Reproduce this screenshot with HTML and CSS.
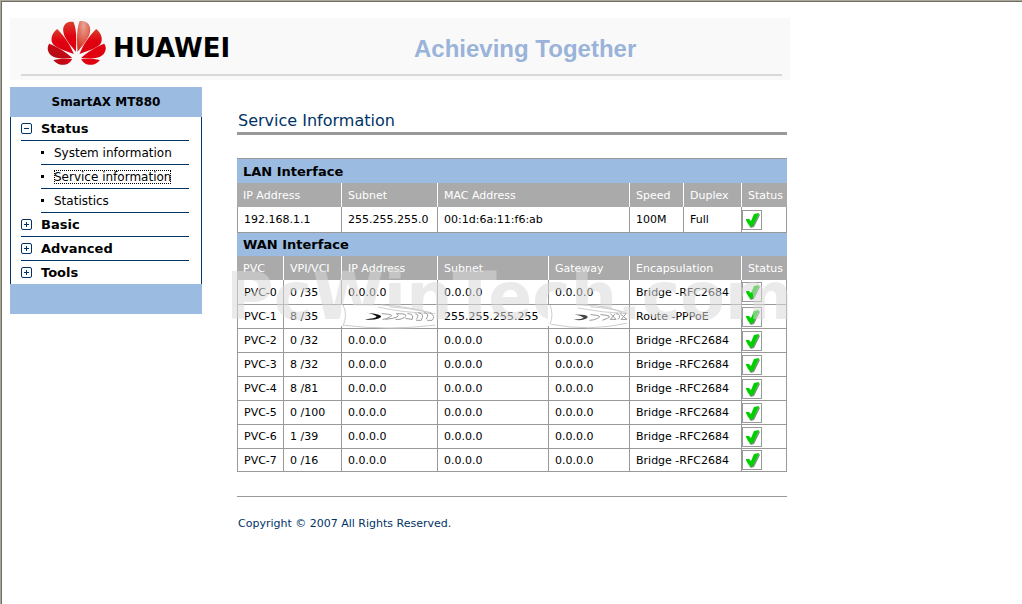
FILE: index.html
```
<!doctype html>
<html lang="en">

<head>
    <meta charset="utf-8">
    <meta name="viewport" content="width=device-width, initial-scale=1">
    <title>SmartAX MT880</title>
    <link rel="stylesheet" href="styles.css">
</head>

<body>
    <!-- shared icons -->
    <svg class="defs" width="0" height="0">
        <symbol id="minus" viewBox="0 0 11 11">
            <rect x="0.5" y="0.5" width="10" height="10" rx="1.5" fill="#fff" stroke="#003366" />
            <path d="M3 5.5h5" stroke="#003366" />
        </symbol>
        <symbol id="plus" viewBox="0 0 11 11">
            <rect x="0.5" y="0.5" width="10" height="10" rx="1.5" fill="#fff" stroke="#003366" />
            <path d="M3 5.5h5M5.5 3v5" stroke="#003366" />
        </symbol>
        <symbol id="tick" viewBox="0 0 18 18">
            <path d="M16 3l1 1-6 12-3 1-2-2 5-3z" fill="#888" />
            <path d="M3 8l3 0 2 2 3-7 5-1v1l-4 8-2 4-2 1-3-3-2-4z" fill="#00d000" />
        </symbol>
    </svg>

    <div class="page">
        <header class="banner">
            <div class="brand">
                <svg class="petals" viewBox="141 60 176 132">
                    <defs>
                        <linearGradient id="red" x1="0" y1="0" x2="0" y2="1">
                            <stop offset="0" stop-color="#d8402c" />
                            <stop offset=".5" stop-color="#e00010" />
                            <stop offset="1" stop-color="#dc0010" />
                        </linearGradient>
                        <radialGradient id="shine" cx=".5" cy=".15" r=".8">
                            <stop offset="0" stop-color="#e8a898" />
                            <stop offset="1" stop-color="#d83020" />
                        </radialGradient>
                        <linearGradient id="dark" x1="0" y1="1" x2="1" y2="0">
                            <stop offset="0" stop-color="#a81018" />
                            <stop offset="1" stop-color="#e00010" />
                        </linearGradient>
                    </defs>
                    <path fill="url(#red)" d="M227 152C200 121 188 104 189 84C190 66 207 59 220 63C230 84 229 120 227 152z" />
                    <path fill="url(#red)" d="M221 159C195 149 162 139 156 125C150 109 159 93 171 84C190 102 211 133 221 159z" />
                    <path fill="url(#dark)" d="M216 171C190 174 160 174 148 158C140 147 142 136 147 128C172 137 200 155 216 171z" />
                    <path fill="url(#dark)" d="M216 174C208 190 195 193 182 191C171 190 164 182 160 177C176 173 199 173 216 174z" />
                    <path fill="url(#shine)" d="M232 152C259 121 271 104 270 84C269 66 252 57 238 61C229 84 230 120 232 152z" />
                    <path fill="url(#red)" d="M238 159C264 149 297 139 303 125C309 109 300 93 288 84C269 102 248 133 238 159z" />
                    <path fill="#e00010" d="M243 171C269 174 299 174 311 158C319 147 318 136 312 128C287 137 259 155 243 171z" />
                    <path fill="#e00010" d="M243 174C251 190 264 193 277 191C288 190 295 182 299 177C283 173 260 173 243 174z" />
                </svg>
                <span class="brand-name">HUAWEI</span>
            </div>
            <span class="slogan">Achieving Together</span>
        </header>

        <div class="columns">
            <nav class="side">
                <div class="side-head">SmartAX MT880</div>
                <ul class="menu">
                    <li>
                        <a class="group" href="#status"><svg class="box"><use href="#minus" /></svg>Status</a>
                        <ul class="submenu">
                            <li><a href="#system">System information</a></li>
                            <li><a class="current" href="#service">Service information</a></li>
                            <li><a href="#statistics">Statistics</a></li>
                        </ul>
                    </li>
                    <li><a class="group" href="#basic"><svg class="box"><use href="#plus" /></svg>Basic</a></li>
                    <li><a class="group" href="#advanced"><svg class="box"><use href="#plus" /></svg>Advanced</a></li>
                    <li><a class="group" href="#tools"><svg class="box"><use href="#plus" /></svg>Tools</a></li>
                </ul>
                <div class="side-foot"></div>
            </nav>

            <main class="content">
                <h1>Service Information</h1>

                <div class="table-wrap">
                    <table>
                        <colgroup>
                            <col class="c-pvc"><col class="c-vpi"><col class="c-ip"><col class="c-subnet">
                            <col class="c-gateway"><col class="c-speed"><col class="c-duplex"><col class="c-status">
                        </colgroup>
                        <tbody class="lan">
                            <tr><th class="title" colspan="8">LAN Interface</th></tr>
                            <tr>
                                <th colspan="2">IP Address</th><th>Subnet</th><th colspan="2">MAC Address</th>
                                <th>Speed</th><th>Duplex</th><th>Status</th>
                            </tr>
                            <tr>
                                <td colspan="2">192.168.1.1</td><td>255.255.255.0</td><td colspan="2">00:1d:6a:11:f6:ab</td>
                                <td>100M</td><td>Full</td><td class="state"><svg class="tick"><use href="#tick" /></svg></td>
                            </tr>
                        </tbody>
                        <tbody class="wan">
                            <tr><th class="title" colspan="8">WAN Interface</th></tr>
                            <tr>
                                <th>PVC</th><th>VPI/VCI</th><th>IP Address</th><th>Subnet</th><th>Gateway</th>
                                <th colspan="2">Encapsulation</th><th>Status</th>
                            </tr>
                            <tr class="first">
                                <td>PVC-0</td><td>0 /35</td><td>0.0.0.0</td><td>0.0.0.0</td><td>0.0.0.0</td>
                                <td colspan="2">Bridge -RFC2684</td><td class="state"><svg class="tick"><use href="#tick" /></svg></td>
                            </tr>
                            <tr>
                                <td>PVC-1</td><td>8 /35</td>
                                <td class="smudge">
                                    <svg viewBox="0 0 96 24" preserveAspectRatio="none">
                                        <path class="patch" d="M-1 0L42 1Q68 2 95 9V23Q55 26 -1 22z" />
                                        <path class="edge" d="M1 0Q6 10 1 22M1 21Q46 27 94 21M40 0Q66 1 92 9M48 2Q68 3 90 8M36 2Q60 8 94 9" />
                                        <path d="M24 8Q46 10 37 14Q31 16 23 15Q34 14 35 12Q32 9 24 8z" fill="#111" />
                                        <path class="scrawl" d="M40 9Q54 10 49 12Q45 15 41 15M44 15Q62 13 55 9M55 9Q69 9 63 13Q59 16 54 15M66 9Q73 9 71 15L64 14M74 9Q79 10 75 15M77 8Q84 9 80 16H75M83 8Q89 9 85 15M89 8Q95 12 91 16H86" />
                                    </svg>
                                </td>
                                <td>255.255.255.255</td>
                                <td class="smudge">
                                    <svg viewBox="0 0 81 24" preserveAspectRatio="none">
                                        <path class="patch" d="M-1 0L42 1Q62 2 80 9V23Q45 26 -1 22z" />
                                        <path class="edge" d="M1 0Q5 10 1 20M2 20Q40 28 79 19M34 0Q59 0 76 9M29 3Q53 8 79 9M42 2Q63 3 78 8" />
                                        <path d="M26 10Q43 10 38 14Q32 17 25 15Q34 15 35 13Q32 11 26 10z" fill="#444" />
                                        <path class="scrawl" d="M42 10Q56 11 49 14Q45 16 41 16M52 10Q66 11 59 14L54 16M62 9L68 15H62L67 9M68 9Q74 10 70 15M72 9L79 15H73L78 9" />
                                    </svg>
                                </td>
                                <td colspan="2">Route -PPPoE</td><td class="state"><svg class="tick"><use href="#tick" /></svg></td>
                            </tr>
                            <tr>
                                <td>PVC-2</td><td>0 /32</td><td>0.0.0.0</td><td>0.0.0.0</td><td>0.0.0.0</td>
                                <td colspan="2">Bridge -RFC2684</td><td class="state"><svg class="tick"><use href="#tick" /></svg></td>
                            </tr>
                            <tr>
                                <td>PVC-3</td><td>8 /32</td><td>0.0.0.0</td><td>0.0.0.0</td><td>0.0.0.0</td>
                                <td colspan="2">Bridge -RFC2684</td><td class="state"><svg class="tick"><use href="#tick" /></svg></td>
                            </tr>
                            <tr>
                                <td>PVC-4</td><td>8 /81</td><td>0.0.0.0</td><td>0.0.0.0</td><td>0.0.0.0</td>
                                <td colspan="2">Bridge -RFC2684</td><td class="state"><svg class="tick"><use href="#tick" /></svg></td>
                            </tr>
                            <tr>
                                <td>PVC-5</td><td>0 /100</td><td>0.0.0.0</td><td>0.0.0.0</td><td>0.0.0.0</td>
                                <td colspan="2">Bridge -RFC2684</td><td class="state"><svg class="tick"><use href="#tick" /></svg></td>
                            </tr>
                            <tr>
                                <td>PVC-6</td><td>1 /39</td><td>0.0.0.0</td><td>0.0.0.0</td><td>0.0.0.0</td>
                                <td colspan="2">Bridge -RFC2684</td><td class="state"><svg class="tick"><use href="#tick" /></svg></td>
                            </tr>
                            <tr class="last">
                                <td>PVC-7</td><td>0 /16</td><td>0.0.0.0</td><td>0.0.0.0</td><td>0.0.0.0</td>
                                <td colspan="2">Bridge -RFC2684</td><td class="state"><svg class="tick"><use href="#tick" /></svg></td>
                            </tr>
                        </tbody>
                    </table>
                    <div class="watermark">PcWinTech.com</div>
                </div>

                <footer>Copyright © 2007 All Rights Reserved.</footer>
            </main>
        </div>
    </div>
</body>

</html>
```
FILE: styles.css
```
* {
    box-sizing: border-box;
}
body {
    margin: 0;
    min-height: 100vh;
    padding: 16px 8px;
    border-top: 1px solid #aca899;
    border-left: 1px solid #aca899;
    box-shadow: inset 1px 1px 0 #716f64;
    background-color: #fff;
    color: #000;
    font-family: Verdana, "DejaVu Sans", sans-serif;
    font-size: 11px;
}
ul {
    list-style: none;
    margin: 0;
    padding: 0;
}
a {
    color: #000;
    text-decoration: none;
}
.defs {
    position: absolute;
}
.page {
    max-width: 782px;
    padding: 1px;
}
.banner {
    display: flex;
    align-items: center;
    height: 62px;
    padding: 0 8px 0 11px;
    background: linear-gradient(#d8d8d8, #d8d8d8) 11px 56px / calc(100% - 19px) 2px no-repeat #f9f9f9;
}
.brand {
    display: flex;
    align-items: center;
    width: 393px;
    padding: 0 0 12px 26px;
}
.petals {
    width: 59px;
    height: 44px;
    margin-right: 7px;
}
.brand-name {
    padding-top: 9px;
    font-size: 26px;
    line-height: 30px;
    font-weight: bold;
}
.slogan {
    color: #9ab3d9;
    font: bold 24px/30px Arial, "Liberation Sans", sans-serif;
}
.columns {
    display: flex;
    align-items: flex-start;
    gap: 35px;
    padding: 7px 3px 0 0;
}
.side {
    flex: none;
    width: 192px;
}
.side-head,
.side-foot {
    height: 30px;
    background-color: #9bbbe1;
}
.side-head {
    font-size: 12px;
    font-weight: bold;
    line-height: 30px;
    text-align: center;
}
.menu {
    padding: 0 12px 0 10px;
    border: solid #003366;
    border-width: 0 1px;
}
.menu a {
    display: inline-block;
}
.menu .group {
    display: flex;
    align-items: center;
    height: 24px;
    border-bottom: 1px solid #003366;
    font-size: 13px;
    font-weight: bold;
}
.menu > li:last-child .group {
    height: 23px;
    border-bottom: 0;
}
.box {
    width: 11px;
    height: 11px;
    margin-right: 9px;
}
.submenu li {
    display: flex;
    align-items: center;
    height: 24px;
    margin-left: 20px;
    border-bottom: 1px solid #003366;
    font-size: 12px;
    line-height: 14px;
}
.submenu li::before {
    content: "";
    width: 3px;
    height: 3px;
    margin-right: 10px;
    background-color: #000;
}
.submenu .current {
    outline: 1px dotted #000;
    outline-offset: -1px;
}
.content {
    flex: 1;
    min-width: 0;
}
h1 {
    margin: 0 0 23px;
    padding: 24px 0 2px 1px;
    border-bottom: 3px solid #999;
    color: #003366;
    font-size: 16px;
    font-weight: normal;
    line-height: 19px;
}
.table-wrap {
    position: relative;
}
table {
    width: 100%;
    table-layout: fixed;
    border-top: 1px solid #999;
    border-spacing: 0;
}
.c-pvc, .c-status {
    width: 46px;
}
.c-vpi, .c-duplex {
    width: 58px;
}
.c-ip {
    width: 96px;
}
.c-subnet {
    width: 111px;
}
.c-gateway {
    width: 81px;
}
.c-speed {
    width: 54px;
}
th, td {
    height: 24px;
    padding: 0 0 0 6px;
    text-align: left;
    white-space: nowrap;
}
th {
    background-color: #aaa;
    border-left: 1px solid #fff;
    color: #fff;
    font-weight: normal;
}
th:first-child {
    border-left: 0;
}
.title {
    background-color: #9bbbe1;
    color: #000;
    font-size: 13px;
    font-weight: bold;
}
td {
    border: solid #999;
    border-width: 0 0 1px 1px;
}
td:last-child {
    border-right: 1px solid #999;
}
.lan td {
    height: 26px;
}
.wan .title,
.last td {
    height: 23px;
}
.first td {
    height: 25px;
}
.state,
.smudge {
    padding: 0;
}
.tick {
    display: block;
    width: 20px;
    height: 20px;
    border: 1px solid #999;
}
.smudge svg {
    display: block;
    position: relative;
    z-index: 2;
    width: 100%;
    height: 23px;
    overflow: visible;
}
.patch {
    fill: #fff;
}
.edge,
.scrawl {
    fill: none;
    stroke: #ccc;
}
.scrawl {
    stroke: #999;
}
.watermark {
    position: absolute;
    z-index: 1;
    left: -11px;
    bottom: 138px;
    color: rgba(217, 217, 217, .55);
    font-size: 65px;
    font-weight: bold;
    line-height: 74px;
    pointer-events: none;
}
footer {
    margin-top: 24px;
    padding: 20px 0 0 1px;
    border-top: 1px solid #999;
    color: #003366;
    line-height: 14px;
}
```
